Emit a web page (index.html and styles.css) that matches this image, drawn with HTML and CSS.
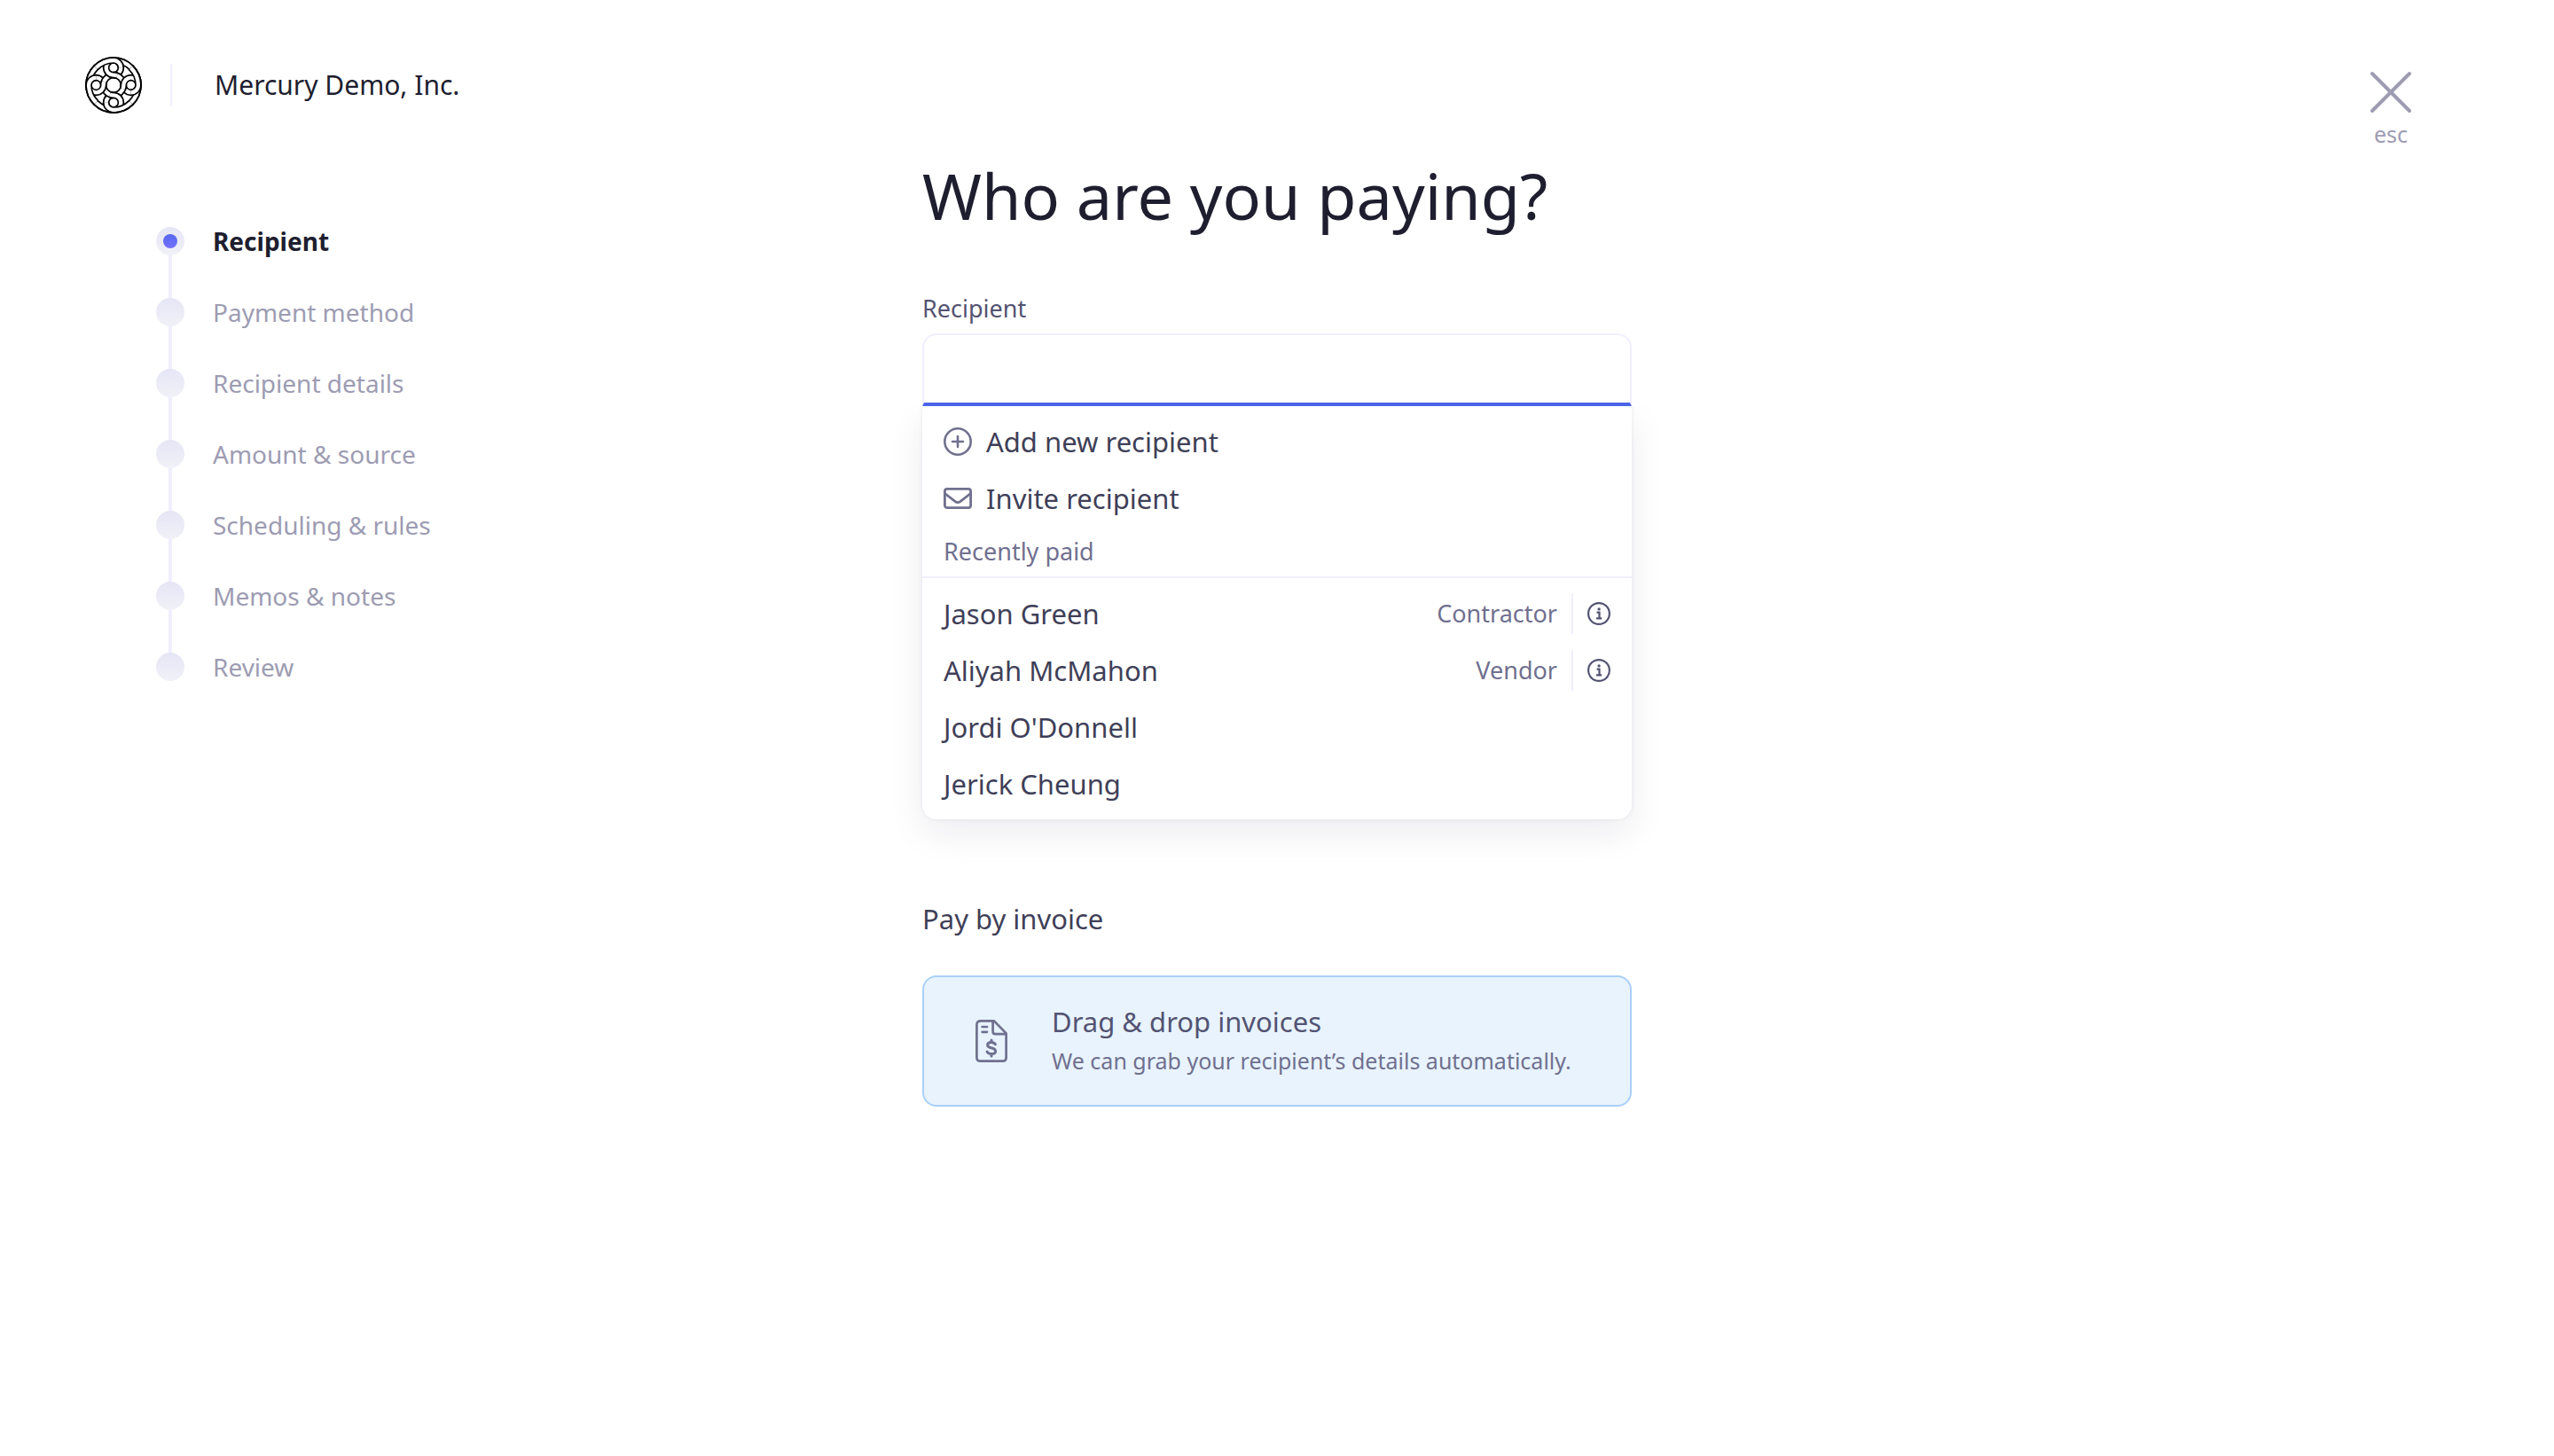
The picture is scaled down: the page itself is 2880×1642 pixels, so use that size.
FILE: index.html
```html
<!DOCTYPE html>
<html lang="en">
<head>
<meta charset="utf-8">
<meta name="viewport" content="width=device-width, initial-scale=1">
<title>Who are you paying?</title>
<link rel="stylesheet" href="styles.css">
</head>
<body>
<div class="page">
  <aside class="side">
    <div class="brand">
      <svg class="brand-logo" viewBox="0 0 192 192" fill="none" aria-hidden="true">
        <defs>
          <path id="curl-under" d="M96 12A25 25 0 0 1 96 62"/>
          <path id="ring" d="M12 96A84 84 0 0 1 96 12"/>
          <path id="tail" d="M96 62A34 34 0 0 1 130 96"/>
          <path id="head" d="M96 12A25 25 0 0 0 96 62A34 34 0 0 1 108 64"/>
          <path id="curl-over" d="M37 37A84 84 0 0 1 96 12A25 25 0 0 1 121 37"/>
          <g id="s-curl-under"><use href="#curl-under" stroke="#000" stroke-width="23"/><use href="#curl-under" stroke="#fff" stroke-width="13"/></g>
          <g id="s-ring"><use href="#ring" stroke="#000" stroke-width="23"/><use href="#ring" stroke="#fff" stroke-width="13"/></g>
          <g id="s-tail"><use href="#tail" stroke="#000" stroke-width="23"/><use href="#tail" stroke="#fff" stroke-width="13"/></g>
          <g id="s-head"><use href="#head" stroke="#000" stroke-width="23"/><use href="#head" stroke="#fff" stroke-width="13"/></g>
          <g id="s-curl-over"><use href="#curl-over" stroke="#000" stroke-width="23"/><use href="#curl-over" stroke="#fff" stroke-width="13"/></g>
        </defs>
        <use href="#s-curl-under"/><use href="#s-curl-under" transform="rotate(90 96 96)"/><use href="#s-curl-under" transform="rotate(180 96 96)"/><use href="#s-curl-under" transform="rotate(270 96 96)"/>
        <use href="#s-ring"/><use href="#s-ring" transform="rotate(90 96 96)"/><use href="#s-ring" transform="rotate(180 96 96)"/><use href="#s-ring" transform="rotate(270 96 96)"/>
        <use href="#s-tail"/><use href="#s-tail" transform="rotate(90 96 96)"/><use href="#s-tail" transform="rotate(180 96 96)"/><use href="#s-tail" transform="rotate(270 96 96)"/>
        <use href="#s-head"/><use href="#s-head" transform="rotate(90 96 96)"/><use href="#s-head" transform="rotate(180 96 96)"/><use href="#s-head" transform="rotate(270 96 96)"/>
        <use href="#s-curl-over"/><use href="#s-curl-over" transform="rotate(90 96 96)"/><use href="#s-curl-over" transform="rotate(180 96 96)"/><use href="#s-curl-over" transform="rotate(270 96 96)"/>
        <circle cx="96" cy="96" r="93" stroke="#000" stroke-width="5"/>
      </svg>
      <span class="brand-divider"></span>
      <span class="brand-name">Mercury Demo, Inc.</span>
    </div>
    <ol class="steps">
      <li class="step step-current" aria-current="step"><span class="dot"></span>Recipient</li>
      <li class="step"><span class="dot"></span>Payment method</li>
      <li class="step"><span class="dot"></span>Recipient details</li>
      <li class="step"><span class="dot"></span>Amount &amp; source</li>
      <li class="step"><span class="dot"></span>Scheduling &amp; rules</li>
      <li class="step"><span class="dot"></span>Memos &amp; notes</li>
      <li class="step"><span class="dot"></span>Review</li>
    </ol>
  </aside>

  <main class="main">
    <h1 class="title">Who are you paying?</h1>
    <label class="label" for="recipient">Recipient</label>
    <input class="input" id="recipient" type="text" autocomplete="off">
    <div class="menu">
      <button class="row" type="button">
        <svg class="row-icon" viewBox="0 0 32 32" fill="none" stroke="currentColor" stroke-width="2.6" stroke-linecap="round" aria-hidden="true"><circle cx="16" cy="16" r="14.7"/><path d="M16 10v12M10 16h12"/></svg>
        Add new recipient
      </button>
      <button class="row" type="button">
        <svg class="row-icon" viewBox="0 0 32 32" fill="none" stroke="currentColor" stroke-width="2.8" stroke-linejoin="round" aria-hidden="true"><rect x="1.4" y="5.4" width="29.2" height="21.2" rx="2.6"/><path d="M1.5 10.5L13.2 19.6Q16 21.6 18.8 19.6L30.5 10.5"/></svg>
        Invite recipient
      </button>
      <h2 class="menu-heading">Recently paid</h2>
      <ul class="people">
        <li class="person"><button class="row" type="button">Jason Green<span class="tag">Contractor</span></button>
          <button class="info" type="button" aria-label="About Jason Green"><svg viewBox="0 0 26 26" fill="none" stroke="currentColor" stroke-width="2.2" aria-hidden="true"><circle cx="13" cy="13" r="11.9"/><path d="M10.6 11.6h2.9v6.6M10 18.4h6.2"/><circle cx="13.1" cy="7.9" r="1.7" fill="currentColor" stroke="none"/></svg></button></li>
        <li class="person"><button class="row" type="button">Aliyah McMahon<span class="tag">Vendor</span></button>
          <button class="info" type="button" aria-label="About Aliyah McMahon"><svg viewBox="0 0 26 26" fill="none" stroke="currentColor" stroke-width="2.2" aria-hidden="true"><circle cx="13" cy="13" r="11.9"/><path d="M10.6 11.6h2.9v6.6M10 18.4h6.2"/><circle cx="13.1" cy="7.9" r="1.7" fill="currentColor" stroke="none"/></svg></button></li>
        <li class="person"><button class="row" type="button">Jordi O'Donnell</button></li>
        <li class="person"><button class="row" type="button">Jerick Cheung</button></li>
      </ul>
    </div>

    <h2 class="section-title">Pay by invoice</h2>
    <button class="drop" type="button">
      <svg class="drop-icon" viewBox="0 0 36 48" fill="none" stroke="currentColor" stroke-width="2.7" stroke-linecap="round" stroke-linejoin="round" aria-hidden="true"><path d="M6 1.4H21L34.6 15.4V42.4Q34.6 46.6 30.4 46.6H5.6Q1.4 46.6 1.4 42.4V6Q1.4 1.4 6 1.4ZM19.6 1.8V13.2Q19.6 16.2 22.6 16.2H34M7.6 8H13M7.6 13.8H13"/><path stroke-width="3" d="M22.4 27.8Q21 25.4 17.8 25.4Q13.6 25.4 13.6 28.5Q13.6 31 17.8 31.8Q22.6 32.7 22.6 35.6Q22.6 38.6 18 38.6Q14.6 38.6 13 36M18 23V25.2M18 38.8V41"/></svg>
      <span class="drop-text">
        <span class="drop-title">Drag &amp; drop invoices</span>
        <span class="drop-note">We can grab your recipient’s details automatically.</span>
      </span>
    </button>
  </main>

  <div class="exit">
    <button class="close" type="button" aria-label="Close, esc">
      <svg class="close-icon" viewBox="0 0 48 48" fill="none" stroke="currentColor" stroke-width="4" stroke-linecap="round" aria-hidden="true"><path d="M3 3L45 45M45 3L3 45"/></svg>
      <span>esc</span>
    </button>
  </div>
</div>
</body>
</html>
```
FILE: styles.css
```css
:root {
  --ink: #1e1e2f;
  --text: #3f3f58;
  --text-soft: #535372;
  --muted: #70708f;
  --faint: #9d9cb2;
  --line: #f0eeff;
  --accent: #4a64e8;
}

* { box-sizing: border-box; }

body {
  margin: 0;
  background: #fff;
  color: var(--text);
  font-family: "Noto Sans", "Open Sans", sans-serif;
  font-size: 31px;
  line-height: 40px;
}

button {
  margin: 0;
  padding: 0;
  border: 0;
  background: none;
  color: inherit;
  font: inherit;
  text-align: left;
  cursor: pointer;
}

h1, h2, ol, ul {
  margin: 0;
  padding: 0;
  font-weight: 400;
  list-style: none;
}

svg { display: block; flex: none; }

.page {
  display: grid;
  grid-template-columns: 1fr minmax(auto, 800px) 1fr;
  align-items: start;
}

/* Brand and progress */
.side { padding: 64px 40px 40px 96px; }

.brand {
  display: flex;
  align-items: center;
  color: var(--ink);
  font-size: 30px;
}

.brand-logo { width: 64px; height: 64px; }

.brand-divider {
  width: 2px;
  height: 48px;
  margin: 0 48px 0 32px;
  background: var(--line);
}

.steps { margin-top: 104px; padding-left: 80px; }

.step {
  display: flex;
  align-items: center;
  gap: 32px;
  height: 80px;
  background: linear-gradient(var(--line), var(--line)) 14px 0 / 4px 100% no-repeat;
  color: var(--faint);
  font-size: 28px;
}

.step:first-child { background-position: 14px 100%; background-size: 4px 50%; }
.step:last-child { background-size: 4px 50%; }
.step-current { color: var(--ink); font-weight: 700; }

.dot {
  display: grid;
  place-items: center;
  width: 32px;
  height: 32px;
  border-radius: 50%;
  background: linear-gradient(#e6e5f5, #f1f1f8);
}

.step-current .dot::before {
  content: "";
  width: 16px;
  height: 16px;
  border-radius: 50%;
  background: linear-gradient(#5468ee, #7771ff);
}

/* Form */
.main {
  display: flex;
  flex-direction: column;
  padding: 180px 0 80px;
}

.title {
  color: var(--ink);
  font-size: 72px;
  line-height: 80px;
}

.label {
  margin: 70px 0 10px;
  color: var(--text-soft);
  font-size: 27px;
  line-height: 36px;
}

.input {
  width: 100%;
  height: 82px;
  padding: 0 24px;
  border: 2px solid var(--line);
  border-bottom: 4px solid var(--accent);
  border-radius: 16px 16px 0 0;
  outline: 0;
  color: var(--text);
  font: inherit;
}

.menu {
  padding: 8px 0;
  border-radius: 0 0 16px 16px;
  background: #fff;
  box-shadow: 0 0 4px rgba(30, 30, 60, 0.08), 0 16px 40px rgba(30, 30, 60, 0.08);
  clip-path: inset(0 -80px -100px);
}

.row {
  display: flex;
  flex: 1;
  align-items: center;
  gap: 16px;
  width: 100%;
  height: 64px;
  padding: 0 24px;
}

.row-icon { width: 32px; height: 32px; color: var(--muted); }

.menu-heading {
  padding: 8px 24px;
  border-bottom: 2px solid var(--line);
  color: var(--muted);
  font-size: 27px;
}

.people { padding-top: 8px; }
.person { display: flex; align-items: center; }

.tag {
  margin-left: auto;
  margin-right: -8px;
  color: var(--muted);
  font-size: 27px;
}

.info {
  display: flex;
  align-items: center;
  height: 46px;
  padding: 0 24px 0 16px;
  border-left: 2px solid var(--line);
  color: var(--text-soft);
}

.info svg { width: 26px; height: 26px; }

.section-title {
  margin: 92px 0 44px;
  font-size: 31px;
}

.drop {
  display: flex;
  align-items: center;
  gap: 50px;
  padding: 30px 58px;
  border: 2px solid #a9d0f7;
  border-radius: 16px;
  background: #e8f3fe;
  color: var(--muted);
}

.drop-icon { width: 36px; height: 48px; }

.drop-text {
  display: flex;
  flex-direction: column;
  gap: 4px;
}

.drop-title { color: var(--text-soft); }
.drop-note { font-size: 25px; }

/* Close */
.exit {
  display: flex;
  justify-content: flex-end;
  padding: 80px 160px 0 0;
}

.close {
  display: flex;
  flex-direction: column;
  align-items: center;
  gap: 8px;
  color: var(--faint);
  font-size: 25px;
  line-height: 30px;
}

.close-icon { width: 48px; height: 48px; }
```
